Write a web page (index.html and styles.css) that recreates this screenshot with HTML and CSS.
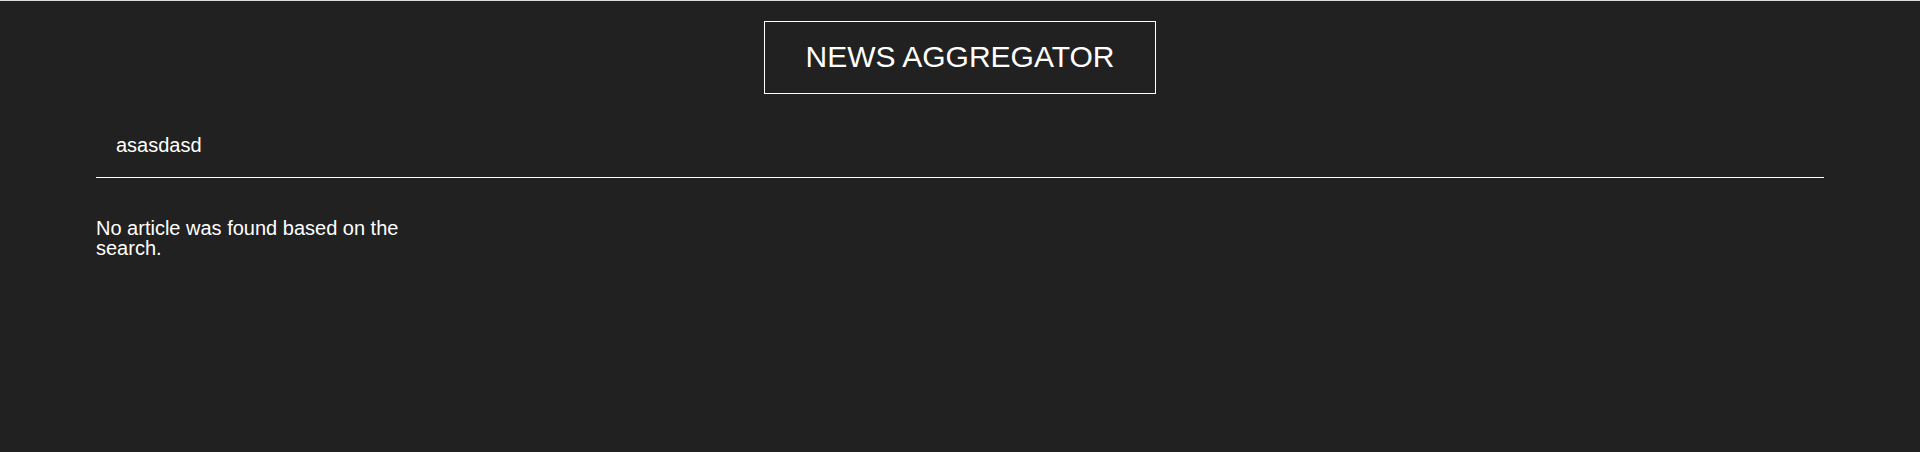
FILE: index.html
```html
<!DOCTYPE html>
<html lang="en">
<head>
<meta charset="utf-8">
<title>News Aggregator</title>
<link rel="stylesheet" href="styles.css">
</head>
<body>
<header class="site-header">
  <h1 class="site-title">NEWS AGGREGATOR</h1>
</header>
<main class="content">
  <input class="search-input" type="text" value="asasdasd" aria-label="Search">
  <section class="results">
    <p class="empty-message">No article was found based on the search.</p>
  </section>
</main>
</body>
</html>
```

FILE: styles.css
```css
html, body {
  margin: 0;
  padding: 0;
}

body {
  min-height: 100vh;
  box-sizing: border-box;
  background: #212121;
  border-top: 1px solid #dcdcdc;
  color: #ffffff;
  font-family: "Liberation Sans", Arial, sans-serif;
}

.site-header {
  display: flex;
  justify-content: center;
  padding-top: 20px;
}

.site-title {
  margin: 0;
  padding: 18px 41px 19px;
  border: 1px solid #ffffff;
  font-size: 30px;
  font-weight: normal;
  line-height: 34px;
  color: #ffffff;
}

.content {
  width: 90%;
  margin: 20px auto 0;
}

.search-input {
  display: block;
  width: 100%;
  box-sizing: border-box;
  margin: 0;
  padding: 20px 20px;
  border: none;
  border-bottom: 1px solid #ffffff;
  background: transparent;
  color: #ffffff;
  font-family: "Liberation Sans", Arial, sans-serif;
  font-size: 20px;
  line-height: 23px;
  outline: none;
}

.results {
  display: grid;
  grid-template-columns: repeat(5, 1fr);
  gap: 20px;
  margin-top: 40px;
}

.empty-message {
  margin: 0;
  font-size: 20px;
  line-height: 1;
}
```
